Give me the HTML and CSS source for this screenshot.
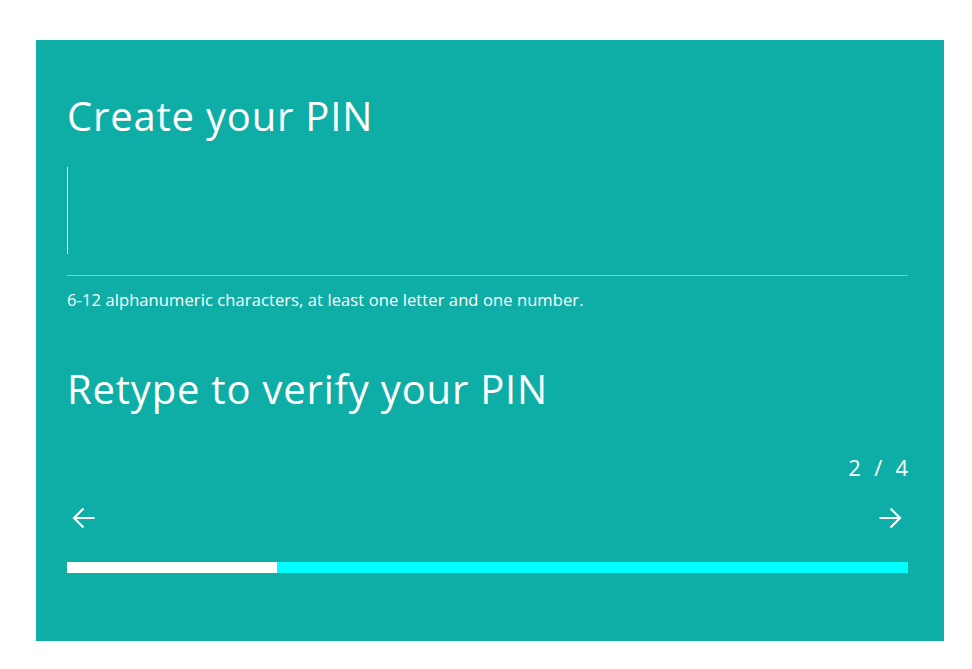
FILE: index.html
```html
<!DOCTYPE html>
<html>
<head>
<meta charset="utf-8">
<link rel="stylesheet" href="styles.css">
</head>
<body>
<div class="panel">
  <h1 class="title">Create your PIN</h1>
  <div class="field">
    <div class="caret"></div>
  </div>
  <p class="hint">6-12 alphanumeric characters, at least one letter and one number.</p>
  <h2 class="title retype">Retype to verify your PIN</h2>
  <div class="counter">2 / 4</div>
  <div class="nav">
    <svg class="arrow" width="24" height="22" viewBox="0 0 24 22"><path d="M22.5 11H2M11.5 1.5L2 11l9.5 9.5" fill="none" stroke="#fff" stroke-width="2.2"/></svg>
    <svg class="arrow" width="24" height="22" viewBox="0 0 24 22"><path d="M1.5 11H22M12.5 1.5L22 11l-9.5 9.5" fill="none" stroke="#fff" stroke-width="2.2"/></svg>
  </div>
  <div class="progress"><div class="progress-fill" style="width:25%"></div></div>
</div>
</body>
</html>
```
FILE: styles.css
```css
html, body {
  margin: 0;
  padding: 0;
  background: #fff;
}
.panel {
  box-sizing: border-box;
  margin: 40px 0 0 36px;
  width: 908px;
  height: 601px;
  background: #0eaea6;
  padding: 52px 36px 0 31px;
  font-family: "Open Sans", sans-serif;
  color: #fff;
}
.title {
  margin: 0;
  font-size: 40px;
  font-weight: 400;
  line-height: 48px;
  letter-spacing: 0.8px;
}
.field {
  margin-top: 27px;
  padding-bottom: 21px;
  border-bottom: 1px solid #6dd1ca;
}
.caret {
  width: 1px;
  height: 87px;
  background: #fff;
}
.hint {
  margin: 14px 0 0;
  font-size: 16.5px;
  line-height: 20px;
  letter-spacing: 0.1px;
}
.retype {
  margin-top: 55px;
}
.counter {
  margin-top: 41px;
  text-align: right;
  font-size: 22px;
  line-height: 26px;
  word-spacing: 7.5px;
}
.nav {
  margin-top: 27px;
  display: flex;
  justify-content: space-between;
  padding: 0 6px 0 5px;
}
.arrow {
  display: block;
}
.progress {
  margin-top: 33px;
  height: 11px;
  background: #00ffff;
}
.progress-fill {
  height: 100%;
  background: #fff;
}
```
